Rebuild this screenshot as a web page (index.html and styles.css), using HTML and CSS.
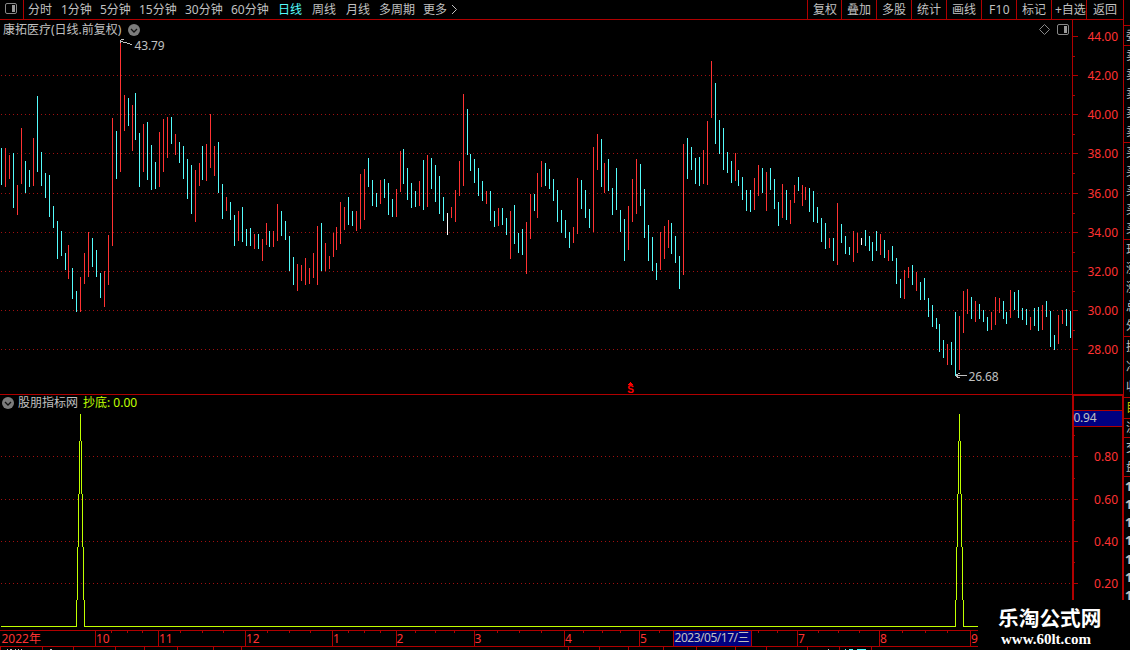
FILE: index.html
```html
<!DOCTYPE html>
<html lang="zh-CN">
<head>
<meta charset="utf-8">
<title>康拓医疗 日线</title>
<link rel="stylesheet" href="styles.css">
</head>
<body>
<div class="app">
  <main class="terminal">
    <header class="toolbar">
      <div class="layout-toggle"><svg width="13" height="12" viewBox="0 0 13 12"><rect x=".5" y=".5" width="11" height="10" rx="1.5" fill="none" stroke="#888"/><rect x="7" y="2" width="3" height="7" fill="#999"/></svg></div>
      <nav class="periods">
        <span>分时</span><span>1分钟</span><span>5分钟</span><span>15分钟</span><span>30分钟</span><span>60分钟</span><span class="active">日线</span><span>周线</span><span>月线</span><span>多周期</span><span>更多</span><svg class="more" width="7" height="11" viewBox="0 0 7 11"><path d="M1 1L5.5 5.5L1 10" fill="none" stroke="#c0c0c0"/></svg>
      </nav>
      <nav class="tools"><span>复权</span><span>叠加</span><span>多股</span><span>统计</span><span>画线</span><span class="wide">F10</span><span>标记</span><span class="tight">+自选</span><span class="last">返回</span></nav>
    </header>

    <section class="panel price">
      <div class="panel-title"><span>康拓医疗(日线.前复权)</span><svg class="drop" width="12" height="12" viewBox="0 0 12 12"><circle cx="6" cy="6" r="6" fill="#7c7c7c"/><path d="M3 5L6 8L9 5" fill="none" stroke="#111" stroke-width="1.3"/></svg></div>
      <svg class="plot" viewBox="0 20 1123 374" width="1123" height="374">
        <g id="price-grid" class="grid"></g>
        <g id="bars"></g>
        <g id="price-axis" class="axis"></g>
        <path class="note-line" d="M120.500 40V43M121 39.500H124M121 41.500H123M123 42.500H127M127 43.500H130M130 44.500H132"/>
        <text class="note" x="134.500" y="50" textLength="30">43.79</text>
        <path class="note-line" d="M956 375.500H967M956 374.500H958M958 373.500H960M956 376.500H958M957 377.500H960"/>
        <text class="note" x="968.500" y="381" textLength="30">26.68</text>
        <path d="M630 382H631V383H632V384H633V385H628V384H629V383H630Z" fill="#f00"/>
        <text class="signal" x="630.500" y="392.500" text-anchor="middle">S</text>
        <path class="tool" d="M1044.500 24.500L1049.500 29.500L1044.500 34.500L1039.500 29.500Z"/>
        <rect class="tool" x="1057.500" y="24.500" width="11" height="10" rx="1.500"/>
        <rect x="1064" y="26" width="3" height="7" fill="#999"/>
      </svg>
    </section>

    <section class="panel indicator">
      <div class="panel-title sub"><svg class="drop" width="12" height="12" viewBox="0 0 12 12"><circle cx="6" cy="6" r="6" fill="#7c7c7c"/><path d="M3 5L6 8L9 5" fill="none" stroke="#111" stroke-width="1.3"/></svg><span class="name">股朋指标网</span><span class="value">抄底: 0.00</span></div>
      <svg class="plot" viewBox="0 394 1123 236" width="1123" height="236">
        <path class="frame" d="M0 394H1123V395H0ZM1072 394H1124V396H1072ZM1072 395H1074V630H1072ZM1122 395H1124V630H1122ZM1074 410H1122V411H1074ZM1074 426H1122V427H1074Z"/>
        <rect x="1074" y="411" width="48" height="15" fill="#000080"/>
        <text class="note" x="1073.500" y="422" textLength="23">0.94</text>
        <g id="ind-grid" class="grid"></g>
        <g id="ind-axis" class="axis"></g>
        <path id="signal-line" class="signal-line"/>
      </svg>
    </section>

    <footer class="timeline">
      <svg viewBox="0 630 1123 20" width="1123" height="20">
        <g id="time-ticks" class="frame"></g>
        <rect x="674" y="631" width="77" height="15" fill="#000080"/>
        <g id="time-labels"></g>
        <text class="note" x="674.500" y="642" textLength="75">2023/05/17/三</text>
        <path class="edge" d="M7 649.500H8M10 649.500H12M15 649.500H16M18 649.500H19M21 649.500H22M50 649.500H52M828 649.500H829"/>
        <path class="edge now" d="M845 649.500H846M849 649.500H853M857 649.500H866"/>
      </svg>
    </footer>
  </main>

  <aside class="quotes">
    <div class="q g1"><i>委</i></div>
    <div class="q g5"><i>卖</i><i>卖</i><i>卖</i><i>卖</i><i>卖</i></div>
    <div class="q g5"><i>买</i><i>买</i><i>买</i><i>买</i><i>买</i></div>
    <div class="q g5"><i>现</i><i>涨</i><i>涨</i><i>总</i><i>外</i></div>
    <div class="q g3"><i>换</i><i>净</i><i>收</i></div>
    <div class="q y"><i>目</i></div>
    <div class="q f"><i>流</i></div>
    <div class="q g2"><i>交</i><i>盘</i></div>
    <div class="q ones"><i>1</i><i>1</i><i>1</i><i>1</i><i>1</i><i>1</i><i>1</i></div>
  </aside>

  <div class="site-mark"><div class="site-name">乐淘公式网</div><div class="site-url">www.60lt.com</div></div>
</div>
<script src="chart.js"></script>
</body>
</html>
```
FILE: styles.css
```css
* { box-sizing: border-box; }
body { margin: 0; background: #000; overflow: hidden; }
.app {
  position: relative; display: grid; grid-template-columns: 1123px 7px;
  width: 1130px; height: 650px; overflow: hidden; color: #c0c0c0;
  font: 12px/19px "Noto Sans", "Noto Sans CJK SC", sans-serif;
}
.terminal { display: flex; flex-direction: column; min-width: 0; }
.toolbar { display: flex; height: 20px; border-bottom: 1px solid #b00000; white-space: nowrap; }
.layout-toggle { width: 24px; padding: 3px 0 0 5px; border-right: 1px solid #b00000; }
.layout-toggle svg, .plot, .timeline svg, .drop { display: block; }
.periods { display: grid; grid-template-columns: 33px 39px 39px 46px 46px 47px 34px 34px 33px 44px 28px 10px; padding-left: 4px; align-items: center; }
.active { color: #54fcfc; }
.tools { display: grid; grid-template-columns: 34px repeat(7, 35px) 37px; margin-left: auto; }
.tools span { border-left: 1px solid #b00000; padding-left: 5px; }
.tools .wide { padding-left: 7px; letter-spacing: .3px; }
.tools .tight { padding-left: 3px; letter-spacing: -.1px; }
.tools .last { padding-left: 6px; }
.panel { position: relative; }
.price { height: 374px; }
.indicator { height: 236px; }
.panel-title { position: absolute; left: 3px; top: 0; display: flex; align-items: center; gap: 7px; white-space: nowrap; }
.panel-title.sub { left: 2px; top: -1px; gap: 4px; }
.sub .value { color: #c0ff00; margin-left: 1px; }
.plot { shape-rendering: crispEdges; }
.drop { shape-rendering: auto; }
.grid { stroke: #a01010; stroke-width: 1; stroke-dasharray: 1 3; }
.axis rect, .frame { fill: #b00000; }
.axis text, .month { fill: #ff3232; font-size: 12px; }
.up { fill: #ff3232; }
.down { fill: #54fcfc; }
.flat { fill: #fff; }
.note { fill: #c0c0c0; font-size: 12px; }
.note-line { stroke: #c0c0c0; fill: none; }
.signal { fill: #f00; font: bold 10px "Liberation Sans", sans-serif; }
.tool { fill: none; stroke: #888; shape-rendering: auto; }
.signal-line { fill: none; stroke: #c0ff00; stroke-width: 1; }
.timeline { height: 20px; }
.timeline svg { shape-rendering: crispEdges; }
.edge { stroke: #c0c0c0; fill: none; }
.edge.now { stroke: #54fcfc; }
.quotes { border-left: 1px solid #b00000; overflow: hidden; padding-top: 25px; }
.q { display: flex; flex-direction: column; justify-content: space-around; border-top: 1px solid #b00000; padding-left: 2px; overflow: hidden; }
.q i { display: block; font-style: normal; width: 12px; line-height: 14px; }
.g1 { height: 20px; }
.g5 { height: 97px; }
.g3 { height: 61px; }
.y { height: 21px; color: #c0c000; }
.f { height: 19px; }
.g2 { height: 39px; }
.ones { height: 128px; font-weight: bold; font-size: 13px; }
.ones i { margin-left: -1px; }
.site-mark { position: absolute; left: 978px; top: 600px; width: 152px; height: 50px; background: #000; color: #fff; white-space: nowrap; padding: 4px 0 0 20px; }
.site-name { font: bold 20.7px/27px "Noto Sans CJK SC", sans-serif; }
.site-url { font: bold 15px/17px "Liberation Serif", serif; padding-left: 3px; }
```
FILE: chart.js
```js
const NS = 'http://www.w3.org/2000/svg';
const byId = id => document.getElementById(id);

function add(parent, tag, attrs, text) {
  const el = document.createElementNS(NS, tag);
  for (const key in attrs) el.setAttribute(key, attrs[key]);
  if (text) el.textContent = text;
  parent.appendChild(el);
}

// Daily ranges: direction (r = up, c = down, w = flat), top, bottom.
const ranges = `c148-185 r148-187 r155-179 c153-208 r185-215 r128-184 c161-193 c170-187 r138-186 c96-172 c152-186 c173-198 c175-217 c206-228 c221-259 c231-256 c253-270
r245-279 c268-299 c291-312 r277-312 r253-284 r232-277 c238-267 c250-277 c273-298 r271-307 r235-285 r118-246 c131-179 r42-172 r95-131 c98-126 r105-151
c93-140 c133-187 r124-172 c122-180 c145-190 c162-189 r132-187 r119-172 r117-158 c117-144 r134-155 c142-163 c146-179 c159-199 c165-214 r170-222 r163-186
c146-180 r144-181 r114-168 r146-176 c142-193 c184-219 r197-211 c202-220 c215-246 r211-241 c207-242 c229-246 c228-246 r234-249 c234-249 r239-261 r223-245
c231-247 r231-247 r204-241 c211-236 c221-240 c236-271 c257-285 r264-291 r265-281 r258-285 r268-284 r253-278 r226-285 c223-271 r243-271 r256-269 r233-257
r227-250 r202-244 r207-230 c197-225 c211-226 r211-231 r174-229 r169-220 c158-187 c180-206 c193-207 r180-204 c179-198 c183-215 c199-217 r189-217 r151-192
c149-184 c168-200 c183-208 c191-207 r181-206 c160-210 r155-207 c158-189 c165-202 c176-214 c197-221 w213-235 r207-218 r190-222 r161-196 r94-186 c109-155
c154-171 c159-183 c168-196 c181-201 r191-204 c191-221 c211-227 r208-226 c208-225 c218-235 r211-259 c205-244 c233-253 c229-255 r222-274 r194-239 c194-211
r173-218 r161-187 c163-186 c169-189 c179-201 c190-222 c210-233 c220-238 c232-248 r227-243 r178-234 c180-209 c190-218 c209-228 r147-232 r134-170 c139-187
r163-193 c159-191 c188-215 c168-210 c210-232 c219-261 r206-250 r179-222 r159-214 c164-206 c189-238 c225-261 c237-271 c263-280 r232-270 r226-259 r220-248
c223-254 c236-263 c256-289 r144-275 c138-179 c147-170 c158-184 c157-186 r150-184 r121-185 r61-118 c83-144 c120-154 c128-170 c152-173 c161-183 r153-181
c170-186 c177-200 c190-211 c190-212 r178-210 r165-196 c168-193 r172-211 c168-190 c179-209 c202-226 r184-218 c190-220 r200-224 r185-203 c177-191 r185-206
r187-200 c188-212 c191-222 c207-223 c218-242 c223-249 r238-248 c238-261 r203-265 c224-243 c236-254 c247-255 r231-262 r233-253 w238-245 c230-246 c236-251
c242-261 c231-251 r234-255 c240-258 r250-261 c246-261 c258-284 c279-298 r270-299 r267-278 c265-285 r272-291 c282-300 c278-300 c298-317 c305-327 c318-329
c324-352 c340-358 r344-365 c342-365 c312-376 r316-370 r291-333 r289-314 c297-319 r301-322 c304-319 c310-322 c317-331 r312-330 r297-325 r298-313 c301-319
c312-324 r290-318 c292-310 c290-318 c308-320 c309-325 r317-330 c308-326 c307-331 r305-330 c301-317 c311-347 c335-350 r315-344 r310-324 c309-326 c311-338`;

const kinds = { r: 'up', c: 'down', w: 'flat' };
ranges.split(/\s+/).forEach((item, n) => {
  const [top, bottom] = item.slice(1).split('-').map(Number);
  add(byId('bars'), 'rect', { class: kinds[item[0]], x: 1 + 4 * n - Math.floor(n / 17), y: top, width: 1, height: bottom - top });
});

function gridLine(group, y) {
  add(group, 'line', { x1: 1, x2: 1071, y1: y + .5, y2: y + .5 });
}
function tick(group, y, major) {
  add(group, 'rect', { x: 1073, y, width: major ? 5 : 2, height: 1 });
}

const priceAxis = byId('price-axis');
add(priceAxis, 'rect', { x: 1072, y: 20, width: 1, height: 374 });
[36, 75, 114, 153, 193, 232, 271, 310, 349].forEach((y, i) => {
  if (i) gridLine(byId('price-grid'), y);
  tick(priceAxis, y, true);
  if (i < 8) tick(priceAxis, y + 20, false);
  add(priceAxis, 'text', { x: 1087.5, y: y + 5, textLength: 30.5 }, (44 - 2 * i) + '.00');
});

const indAxis = byId('ind-axis');
[456, 499, 541, 583].forEach((y, i) => {
  gridLine(byId('ind-grid'), y);
  tick(indAxis, y, true);
  tick(indAxis, y - 21, false);
  add(indAxis, 'text', { x: 1094, y: y + 5, textLength: 24 }, (0.8 - 0.2 * i).toFixed(2));
});

// Zero baseline with one stepped spike per signal day.
let line = '';
[[1, 77], [84, 960], [963, 978]].forEach(([a, b]) => { line += `M${a} 626.5H${b}`; });
[80, 959].forEach(x => {
  line += `M${x + .5} 414V441`;
  [[441, 494], [494, 547], [547, 600], [600, 627]].forEach(([a, b], i) => {
    line += `M${x - i - .5} ${a}V${b}M${x + i + 1.5} ${a}V${b}`;
  });
});
line = line.replace('M84 626.5H960', 'M84 626.5H956');
byId('signal-line').setAttribute('d', line);

const ticks = byId('time-ticks');
add(ticks, 'rect', { x: 0, y: 630, width: 1123, height: 1 });
add(ticks, 'rect', { x: 0, y: 646, width: 1123, height: 1 });
[95, 158, 245, 332, 396, 474, 564, 639, 673, 751, 797, 879, 970].forEach(x => add(ticks, 'rect', { x, y: 631, width: 1, height: 15 }));
[111, 127, 142, 180, 202, 223, 267, 289, 310, 348, 364, 380, 415, 435, 454, 497, 519, 541, 583, 602, 620, 659, 758, 777, 818, 838, 859, 902, 925, 947].forEach(x => add(ticks, 'rect', { x, y: 631, width: 1, height: 2 }));
[0, 42, 73, 115, 144, 177, 213, 241, 568, 599, 628, 663, 696, 735, 766, 807, 839, 871].forEach(x => add(ticks, 'rect', { x, y: 647, width: 1, height: 3 }));
[[1.5, '2022年'], [96, '10'], [159, '11'], [246, '12'], [333, '1'], [396.5, '2'], [474.5, '3'], [565, '4'], [640, '5'], [798, '7'], [880, '8'], [971, '9']].forEach(([x, label]) => {
  add(byId('time-labels'), 'text', { class: 'month', x, y: 643 }, label);
});
```
